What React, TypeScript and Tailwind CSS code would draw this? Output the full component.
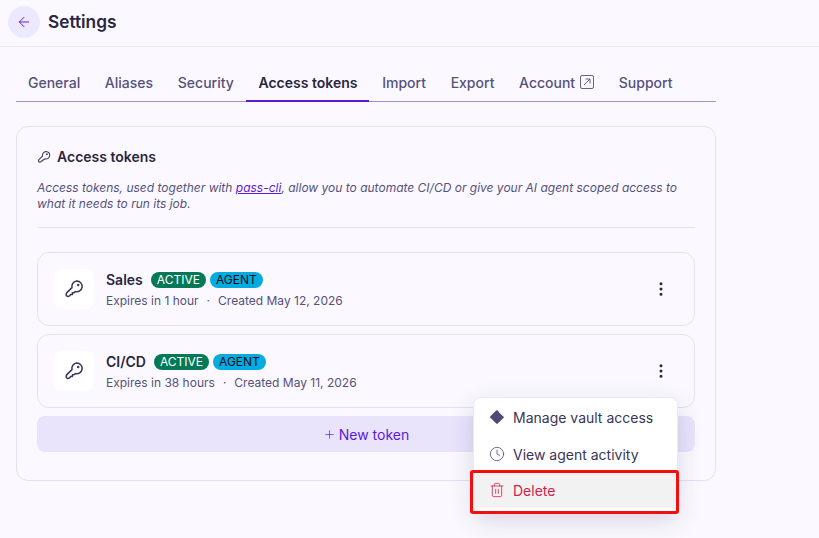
import { MoreVertical, Trash2, Clock, ArrowLeft, Plus } from "lucide-react";

function KeyIcon({ size = 20 }: { size?: number }) {
  return (
    <svg width={size} height={size} viewBox="0 0 20 20" fill="none" stroke="currentColor" strokeWidth="1.5" strokeLinejoin="round" strokeLinecap="round">
      <path d="M12.8 2a5.4 5.4 0 1 1-1.5 10.6l-1.3 1.2H8.4v1.6H6.6l-.9 1.5-1.7.6-1.5-.6-.4-1.6.5-1.4 5.4-5.3A5.4 5.4 0 0 1 12.8 2Z" />
      <circle cx="14.2" cy="5.9" r="0.5" fill="currentColor" />
    </svg>
  );
}

function Token({ name, expires, created }: { name: string; expires: string; created: string }) {
  return (
    <div className="flex h-[74px] items-center rounded-xl border border-[#e5dffa] pl-[16px] pr-[24px]">
      <div className="flex h-10 w-10 items-center justify-center rounded-lg bg-white text-[#3b3654]">
        <KeyIcon />
      </div>
      <div className="ml-[12px] flex-1 pt-[1px]">
        <div className="flex h-[20px] items-center">
          <span className="text-[14px] font-semibold text-[#2a2540]">{name}</span>
          <span className="ml-[8px] flex h-[16px] items-center rounded-full bg-[#047857] px-[6px] text-[12px] text-white">ACTIVE</span>
          <span className="ml-[4px] flex h-[16px] items-center rounded-full bg-[#02ace0] px-[6px] text-[12px] text-[#0c0c14]">AGENT</span>
        </div>
        <div className="mt-[2px] flex text-[12px] leading-[18px] text-[#55517a]">
          <span>{expires}</span>
          <span className="mx-[8px]">·</span>
          <span>{created}</span>
        </div>
      </div>
      <MoreVertical size={18} strokeWidth={2} className="text-[#2a2540]" />
    </div>
  );
}

const tabs = ["General", "Aliases", "Security", "Access tokens", "Import", "Export", "Account", "Support"];

export default function App() {
  return (
    <div className="relative h-[538px] w-[819px] overflow-hidden bg-[#fbf9ff] font-['Inter',sans-serif]">
      <header className="flex h-[47px] items-center border-b border-[#e9e4fb] pb-[2px] pl-[8px]">
        <div className="flex h-8 w-8 items-center justify-center rounded-full bg-[#ece8fd] text-[#6320dc]">
          <ArrowLeft size={16} strokeWidth={1.5} />
        </div>
        <h1 className="ml-[8px] text-[17.25px] font-semibold text-[#2a2540]">Settings</h1>
      </header>

      <main className="ml-[16px] w-[700px]">
        <nav className="mt-[20px] flex h-[35px] gap-[0.7px] border-b border-[#9d94c9]">
          {tabs.map((t) => (
            <div
              key={t}
              className={
                "-mb-px flex items-center gap-[5px] border-b-2 px-[12px] pb-[3px] text-[14px] font-medium " +
                (t === "Access tokens" ? "border-[#5b1ad6] font-semibold text-[#2a2540]" : "border-transparent text-[#55517a]")
              }
            >
              {t}
              {t === "Account" && (
                <svg width="14" height="14" viewBox="0 0 14 14" fill="none" stroke="currentColor" strokeWidth="0.9">
                  <rect x="0.5" y="0.5" width="13" height="13" rx="1.5" />
                  <path d="M4 10 10 4M5.5 4H10v4.5" />
                </svg>
              )}
            </div>
          ))}
        </nav>

        <section className="mt-[24px] h-[355px] rounded-xl border border-[#e5dffa] px-[20px] pt-[21px]">
          <div className="flex items-center">
            <span className="text-[#3b3654]"><KeyIcon size={14} /></span>
            <h2 className="ml-[6px] text-[14px] font-semibold leading-[17px] text-[#2a2540]">Access tokens</h2>
          </div>
          <p className="mt-[14.5px] text-[12px] italic leading-[16px] text-[#55517a]">
            Access tokens, used together with{" "}
            <a className="text-[#5b1ad6] underline">pass-cli</a>, allow you to automate CI/CD or give your AI agent scoped access to what it needs to run its job.
          </p>
          <div className="mt-[15.5px] border-t border-[#e5dffa]" />
          <div className="mt-[24px] flex flex-col gap-[8px]">
            <Token name="Sales" expires="Expires in 1 hour" created="Created May 12, 2026" />
            <Token name="CI/CD" expires="Expires in 38 hours" created="Created May 11, 2026" />
          </div>
          <button className="mt-[8px] flex h-[36px] w-full items-center justify-center gap-[3px] rounded-lg bg-[#e9e4fc] text-[14px] text-[#5b1ad6]">
            <Plus size={13} strokeWidth={1.25} />
            New token
          </button>
        </section>
      </main>

      <div className="absolute left-[473px] top-[397px] w-[205px] rounded-lg border border-[#ece8fb] bg-white pt-[1px] shadow-[0_8px_24px_rgba(40,30,80,0.16)]">
        <div className="flex h-[37px] items-center gap-[8px] pb-[1px] pl-[15px] text-[14px] text-[#3a3556]">
          <svg width="16" height="16" viewBox="0 0 16 16"><path d="M7.2 1.6a1.2 1.2 0 0 1 1.6 0l5.8 5.6a1.1 1.1 0 0 1 0 1.6l-5.8 5.6a1.2 1.2 0 0 1-1.6 0L1.4 8.8a1.1 1.1 0 0 1 0-1.6Z" fill="#4f4a75" /><path d="M9.6 2.6 14.6 7.6" stroke="#fff" strokeWidth="0.8" fill="none" /></svg>
          Manage vault access
        </div>
        <div className="flex h-[36px] items-center gap-[8px] pl-[15px] text-[14px] text-[#3a3556]">
          <Clock size={16} strokeWidth={1.2} className="text-[#4f4a75]" />
          View agent activity
        </div>
        <div className="flex h-[36px] items-center gap-[8px] bg-[#f3f2f3] pl-[15px] text-[14px] text-[#d1204e]">
          <Trash2 size={16} strokeWidth={1.2} />
          Delete
        </div>
        <div className="h-[4px]" />
      </div>
      <div className="absolute left-[470px] top-[470px] h-[44px] w-[209px] rounded-[3px] border-[3px] border-[#f40f0f]" />
    </div>
  );
}
